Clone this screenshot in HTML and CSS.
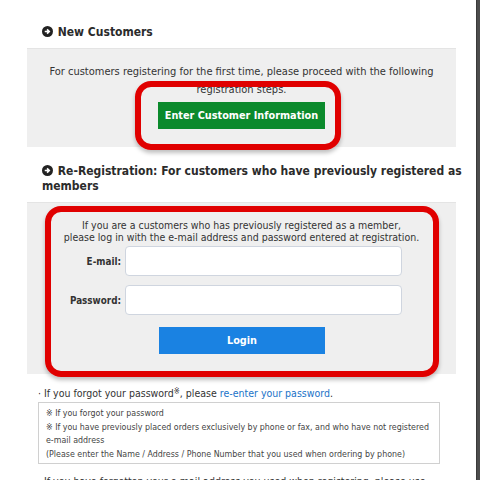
FILE: index.html
```html
<!DOCTYPE html>
<html lang="en">
<head>
    <meta charset="UTF-8">
    <title>Customer Registration</title>
    <link rel="stylesheet" href="styles.css">
</head>
<body>
    <div class="page">
        <div class="main">
            <h2 class="section-title">
                <svg class="arrow-icon" viewBox="0 0 12 12"><circle cx="6" cy="6" r="6" fill="#222"/><path d="M3 6h4.5M5.5 3.6 7.9 6 5.5 8.4" stroke="#fff" stroke-width="1.8" fill="none"/></svg>
                New Customers
            </h2>
            <div class="panel panel-new">
                <p class="lead">For customers registering for the first time, please proceed with the following registration steps.</p>
                <div class="marked">
                    <a class="btn btn-green" href="#">Enter Customer Information</a>
                    <span class="ring ring-new"></span>
                </div>
            </div>

            <h2 class="section-title">
                <svg class="arrow-icon" viewBox="0 0 12 12"><circle cx="6" cy="6" r="6" fill="#222"/><path d="M3 6h4.5M5.5 3.6 7.9 6 5.5 8.4" stroke="#fff" stroke-width="1.8" fill="none"/></svg>
                Re-Registration: For customers who have previously registered as members
            </h2>
            <div class="panel panel-login">
                <p class="lead small">If you are a customers who has previously registered as a member,<br>please log in with the e-mail address and password entered at registration.</p>
                <form class="login-form">
                    <label for="email">E-mail:</label>
                    <input id="email" type="text">
                    <label for="password">Password:</label>
                    <input id="password" type="password">
                </form>
                <div class="center">
                    <a class="btn btn-blue" href="#">Login</a>
                </div>
                <span class="ring ring-login"></span>
            </div>

            <p class="note">· If you forgot your password<span class="kome">※</span>, please <a href="#">re-enter your password</a>.</p>
            <div class="note-box">
                <p>※ If you forgot your password</p>
                <p>※ If you have previously placed orders exclusively by phone or fax, and who have not registered e-mail address</p>
                <p>(Please enter the Name / Address / Phone Number that you used when ordering by phone)</p>
            </div>
            <p class="note">· If you have forgotten your e-mail address you used when registering, please use</p>
        </div>
        <div class="side-strip"></div>
    </div>
</body>
</html>
```

FILE: styles.css
```css
* {
    margin: 0;
    padding: 0;
    box-sizing: border-box;
}

body {
    font-family: 'DejaVu Sans Condensed', 'DejaVu Sans', 'Liberation Sans', sans-serif;
    background: #fff;
    color: #333;
    overflow: hidden;
}

.page {
    display: flex;
    height: 480px;
}

.main {
    flex: 1;
    min-width: 0;
    padding: 25px 8px 0 27px;
}

.side-strip {
    width: 4px;
    background: #4d4d4d;
    border-left: 1px solid #3a3a3a;
}

.section-title {
    font-size: 12px;
    font-weight: bold;
    line-height: 15px;
    padding-left: 15px;
    color: #2b2b2b;
    margin-bottom: 8px;
}

.arrow-icon {
    width: 11px;
    height: 11px;
    vertical-align: -1px;
    margin-right: 1px;
}

.panel {
    position: relative;
    width: 429px;
    background: #efefef;
    border-top: 1px solid #e4e4e4;
    text-align: center;
}

.panel-new {
    padding: 14px 10px 18px;
    margin-bottom: 17px;
}

.panel-login {
    padding: 16px 10px 20px;
    margin-bottom: 11px;
}

.lead {
    font-size: 11px;
    line-height: 18px;
    color: #333;
}

.lead.small {
    font-size: 10.5px;
    line-height: 12px;
}

.marked {
    position: relative;
    display: inline-block;
    margin-top: 3px;
}

.btn {
    display: block;
    width: 167px;
    height: 27px;
    line-height: 27px;
    color: #fff;
    font-size: 10.8px;
    font-weight: bold;
    text-decoration: none;
    text-align: center;
    white-space: nowrap;
}

.btn-green {
    background: #0b8a2c;
}

.btn-blue {
    background: #1a82e2;
    width: 166px;
}

.center {
    display: flex;
    justify-content: center;
    margin-left: 1px;
}

.ring {
    position: absolute;
    border: 6px solid #e00000;
    border-radius: 16px;
    box-shadow: 0 3px 4px rgba(0, 0, 0, 0.25);
    pointer-events: none;
}

.ring-new {
    top: -21px;
    left: -23px;
    right: -16px;
    bottom: -21px;
}

.ring-login {
    top: 3px;
    left: 18px;
    right: 17px;
    bottom: -3px;
}

.login-form {
    display: grid;
    grid-template-columns: 84px 277px;
    column-gap: 4px;
    row-gap: 9px;
    align-items: center;
    margin-top: 3px;
    margin-bottom: 12px;
}

.login-form label {
    text-align: right;
    font-size: 9.8px;
    font-weight: bold;
    color: #333;
}

.login-form input {
    height: 30px;
    border: 1px solid #cfd5df;
    border-radius: 4px;
    background: #fff;
}

.note {
    font-size: 10.5px;
    line-height: 14px;
    padding-left: 11px;
    color: #333;
    white-space: nowrap;
}

.note a {
    color: #1a73c8;
    text-decoration: none;
}

.kome {
    font-size: 8px;
    vertical-align: 3px;
}

.note-box {
    border: 1px solid #d0d0d0;
    width: 402px;
    margin: 2px 0 10px 11px;
    padding: 4px 7px 2px;
}

.note-box p {
    font-size: 8.8px;
    line-height: 13.5px;
    color: #444;
}
```
